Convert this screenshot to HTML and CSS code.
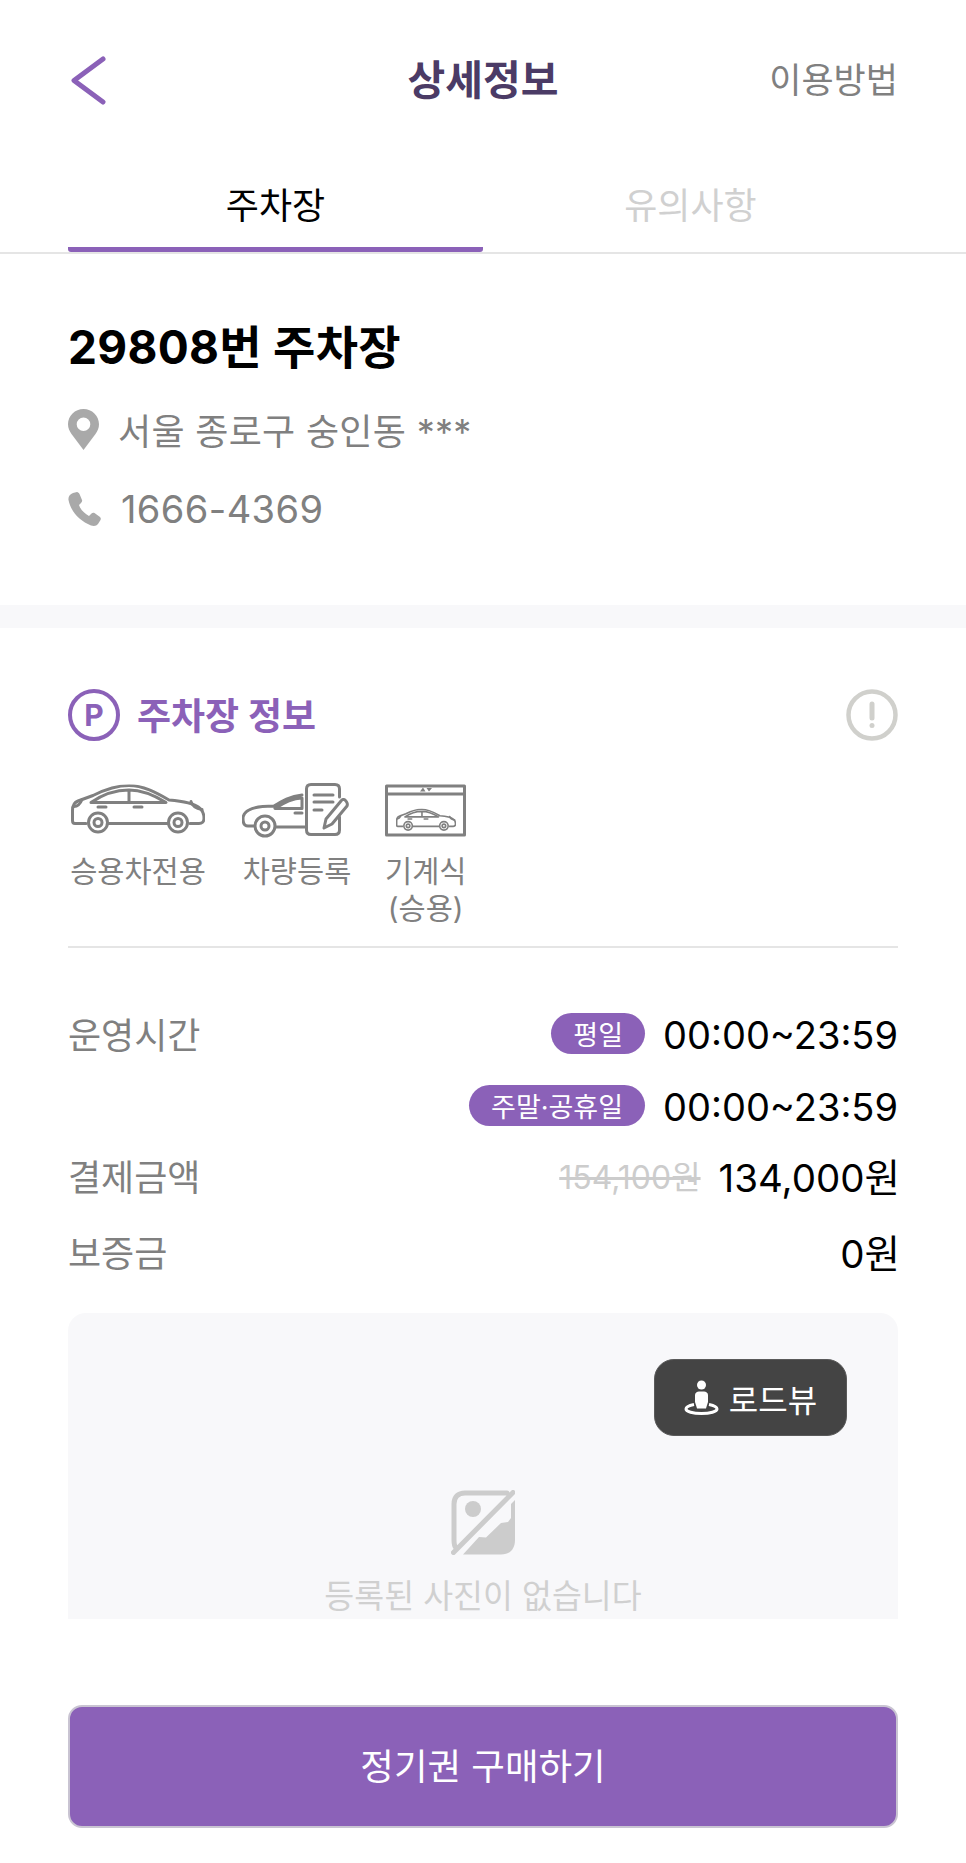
FILE: index.html
```html
<!doctype html>
<html lang="ko">

<head>
    <title>상세정보</title>
    <meta charset="UTF-8" />
    <meta name="viewport" content="width=device-width, initial-scale=1" />
    <link rel="stylesheet" href="styles.css">
</head>

<body>
    <svg class="defs" width="0" height="0">
        <symbol id="sedan" viewBox="0 0 134 52">
            <path d="M15 39H4C2 39 1.500 38 1.500 36V26C1.500 21 3 18 7 16.500L22 11C38 3 48 1 58 1C72 1 85 8 98 15.500C110 16.500 122 18 128 23C132 26 133 30 133 34C133 37 131 39 128 39H119M97 39H37" />
            <path d="M20 18C33 9 46 5.500 58 5.500C70 5.500 82 10 95 18H20ZM58 6V18M27 22.500H35M63 22.500H71M120 17C121 21 125 24 131 25M3 22C6 22 9 20 11 15" />
            <circle cx="27" cy="38" r="9.500" />
            <circle cx="27" cy="38" r="4" />
            <circle cx="107" cy="38" r="9.500" />
            <circle cx="107" cy="38" r="4" />
        </symbol>
    </svg>

    <div class="page">
        <header class="topbar">
            <svg class="back" width="36" height="50" viewBox="0 0 36 50">
                <path d="M32 3L3 24.500L32 46" />
            </svg>
            <h1 class="topbar-title">상세정보</h1>
            <span class="topbar-link">이용방법</span>
        </header>

        <nav class="tabs">
            <div class="tab active">주차장</div>
            <div class="tab">유의사항</div>
        </nav>

        <section class="summary">
            <h2 class="lot-name">29808번 주차장</h2>
            <div class="contact">
                <svg width="31" height="41" viewBox="0 0 31 41">
                    <path class="icon-grey" fill-rule="evenodd" d="M15.500 0C24 0 31 6.800 31 15.200C31 19 29.500 22 27.500 25L15.500 41L3.500 25C1.500 22 0 19 0 15.200C0 6.800 7 0 15.500 0ZM15.500 8.500A6.800 6.800 0 1 0 15.500 22.100A6.800 6.800 0 1 0 15.500 8.500Z" />
                </svg>
                <span class="address">서울 종로구 숭인동 ***</span>
            </div>
            <div class="contact phone-row">
                <svg width="33" height="34" viewBox="0 0 33 34">
                    <path class="icon-grey" d="M5 1L9 0C10 0 11 1 11.500 2L14 8C14.500 9 14 10 13 11L11 13C12 17 16 21 21 24L23.500 21.500C24.500 20.500 25.500 20.500 26.500 21L32 25C33 26 33 27 32.500 28L30 32C28.500 34 26 34.500 23 33.500C12 29 3 20 0.500 8C0 5 2 2 5 1Z" />
                </svg>
                <span class="phone">1666-4369</span>
            </div>
        </section>

        <div class="band"></div>

        <section class="info">
            <div class="info-head">
                <span class="p-mark">P</span>
                <h3 class="info-title">주차장 정보</h3>
                <svg class="alert" width="52" height="52" viewBox="0 0 52 52">
                    <circle cx="26" cy="26" r="23.500" />
                    <path d="M26 15V29" />
                    <circle class="alert-dot" cx="26" cy="36.500" r="2.500" />
                </svg>
            </div>

            <div class="amenities">
                <div class="amenity">
                    <svg class="line-icon" width="136" height="52" viewBox="0 0 136 52">
                        <use href="#sedan" width="134" height="52" x="1" />
                    </svg>
                    <span>승용차전용</span>
                </div>
                <div class="amenity">
                    <svg class="line-icon" width="110" height="55" viewBox="0 0 110 55">
                        <path d="M60 12C48 13 40 18 32 23C22 23 12 24 7 27C3 29 1 32 1 36C1 40 2 43 6 43H12M34 44H63M33 25.500H60V15C50 15.500 41 20 33 25.500ZM53 30H60" />
                        <circle cx="23" cy="43" r="10" />
                        <circle cx="23" cy="43" r="4" />
                        <path d="M97.500 14V6C97.500 3 96 1.500 93 1.500H69C66 1.500 64.500 3 64.500 6V47C64.500 50 66 51.500 69 51.500H93C96 51.500 97.500 50 97.500 47V34M72 12H91M72 19H91M72 27H80" />
                        <path d="M103 17C105 19 106 21 105 23L90 41L82 45L84 36L99 18C100 16.500 102 16 103 17Z" />
                    </svg>
                    <span>차량등록</span>
                </div>
                <div class="amenity">
                    <svg class="line-icon" width="81" height="52" viewBox="0 0 81 52">
                        <rect x="1.500" y="1.500" width="78" height="49" />
                        <path d="M1.500 9.500H79.500" />
                        <path class="garage-arrows" d="M35 7L38 3L40.500 7ZM41.500 3.500H47L44 7Z" />
                        <use class="mini-car" href="#sedan" x="11" y="24" width="60" height="24" />
                    </svg>
                    <span>기계식<br>(승용)</span>
                </div>
            </div>

            <div class="rows">
                <div class="row">
                    <span class="row-label">운영시간</span>
                    <span class="pill">평일</span>
                    <span class="row-value">00:00~23:59</span>
                </div>
                <div class="row">
                    <span class="pill">주말·공휴일</span>
                    <span class="row-value">00:00~23:59</span>
                </div>
                <div class="row row-price">
                    <span class="row-label">결제금액</span>
                    <span class="old-price">154,100원</span>
                    <span class="row-won">134,000원</span>
                </div>
                <div class="row row-last">
                    <span class="row-label">보증금</span>
                    <span class="row-won">0원</span>
                </div>
            </div>

            <div class="photo">
                <button class="roadview">
                    <svg width="35" height="35" viewBox="0 0 35 35">
                        <circle class="rv-fill" cx="17.500" cy="5" r="4.500" />
                        <path class="rv-ring" d="M10 24.500C5 25.500 2 27 2 29C2 31.500 9 33.500 17.500 33.500C26 33.500 33 31.500 33 29C33 27 30 25.500 25 24.500" />
                        <path class="rv-fill" d="M11 15C11 13 13 11.500 15 11.500H20C22 11.500 24 13 24 15V22L22 28.500H13L11 22Z" />
                    </svg>
                    로드뷰
                </button>
                <svg class="no-photo" width="64" height="65" viewBox="0 0 64 65">
                    <path class="np-line" d="M56 3H14C7 3 3 7 3 14V50C3 54 4 57 5 58M2.500 62.500L62 2.500" />
                    <circle class="np-fill" cx="22" cy="19" r="8" />
                    <path class="np-fill" d="M12 64.500L28 47L35 47.500L50 33L57 32L60 28V14L64 10V50C64 59 59 64.500 50 64.500Z" />
                </svg>
                <p class="no-photo-text">등록된 사진이 없습니다</p>
            </div>
        </section>

        <button class="buy">정기권 구매하기</button>
    </div>
</body>

</html>
```

FILE: styles.css
```css
body {
    margin: 0;
    background: #fff;
    font-family: Inter, "Noto Sans CJK KR", sans-serif;
    color: #000;
}

.defs {
    display: block;
    height: 0;
}

.page {
    width: 966px;
    height: 1863px;
    overflow: hidden;
    display: flex;
    flex-direction: column;
}

h1, h2, h3, p {
    margin: 0;
}

/* top bar */
.topbar {
    height: 158px;
    padding: 0 68px 4px;
    display: grid;
    grid-template-columns: 1fr auto 1fr;
    align-items: center;
    box-sizing: border-box;
}

.back {
    margin: 7px 0 0 3px;
}

.back path {
    fill: none;
    stroke: #8b61b8;
    stroke-width: 5;
    stroke-linecap: round;
    stroke-linejoin: round;
}

.topbar-title {
    font-size: 41px;
    font-weight: 700;
    color: #4b3b66;
}

.topbar-link {
    justify-self: end;
    font-size: 35px;
    color: #808080;
}

/* tabs */
.tabs {
    height: 96px;
    box-sizing: border-box;
    padding: 0 68px;
    display: grid;
    grid-template-columns: 1fr 1fr;
    border-bottom: 2px solid #e5e5e5;
}

.tab {
    display: flex;
    align-items: center;
    justify-content: center;
    padding-top: 1px;
    font-size: 36px;
    color: #d0d0d0;
    height: 94px;
    box-sizing: border-box;
    border-bottom: 5px solid transparent;
}

.tab.active {
    color: #000;
    border-bottom-color: #8b61b8;
    border-radius: 0 0 3px 3px;
}

/* summary */
.summary {
    height: 351px;
    padding: 63px 68px 0;
    box-sizing: border-box;
}

.lot-name {
    font-size: 46px;
    font-weight: 700;
    line-height: 60px;
    letter-spacing: 0.300px;
}

.contact {
    display: flex;
    align-items: center;
    margin-top: 27px;
    height: 50px;
    color: #808080;
}

.icon-grey {
    fill: #a9a9a9;
}

.address {
    margin-left: 19px;
    font-size: 36px;
    letter-spacing: 0.300px;
}

.phone-row {
    margin-top: 30px;
}

.phone {
    margin-left: 20px;
    font-size: 38px;
    letter-spacing: 0.400px;
}

.band {
    height: 23px;
    background: #f8f8fa;
}

/* parking info */
.info {
    padding: 61px 68px 0;
}

.info-head {
    display: flex;
    align-items: center;
    height: 52px;
}

.p-mark {
    width: 52px;
    height: 52px;
    box-sizing: border-box;
    border: 4.500px solid #8b61b8;
    border-radius: 50%;
    display: flex;
    align-items: center;
    justify-content: center;
    color: #8b61b8;
    font-size: 30px;
    font-weight: 700;
}

.info-title {
    margin-left: 17px;
    padding-bottom: 3px;
    font-size: 37px;
    font-weight: 700;
    color: #8b61b8;
}

.alert {
    margin-left: auto;
    fill: none;
    stroke: #d0d0cc;
    stroke-width: 4.500;
}

.alert path {
    stroke-width: 5;
    stroke-linecap: round;
}

.alert-dot {
    fill: #d0d0cc;
    stroke: none;
}

.amenities {
    margin-top: 42px;
    padding: 0 0 19px 2px;
    display: flex;
    gap: 33px;
    border-bottom: 2px solid #e5e5e5;
}

.amenity {
    display: flex;
    flex-direction: column;
    align-items: center;
    font-size: 29.500px;
    line-height: 37px;
    color: #808080;
    text-align: center;
}

.amenity:first-child {
    margin-right: 3px;
}

.amenity svg {
    height: 55px;
    margin-bottom: 15px;
    flex: none;
}

.line-icon {
    fill: none;
    stroke: #808080;
    stroke-width: 3;
    stroke-linecap: round;
    stroke-linejoin: round;
}

.garage-arrows {
    fill: #808080;
    stroke: none;
}

.mini-car {
    stroke-width: 3.600;
}

/* rows */
.rows {
    margin-top: 49px;
}

.row {
    height: 72.500px;
    display: flex;
    align-items: center;
    justify-content: flex-end;
}

.row-price {
    margin-top: -3px;
}

.row-last {
    margin-top: 3px;
}

.row-label {
    margin-right: auto;
    font-size: 36px;
    color: #808080;
}

.row-value {
    padding-top: 3px;
    font-size: 38px;
}

.row-won {
    margin-right: -2px;
    font-size: 38.500px;
}

.pill {
    height: 41px;
    padding: 0 22px;
    margin-right: 18px;
    border-radius: 21px;
    background: #8b61b8;
    color: #fff;
    font-size: 27px;
    display: flex;
    align-items: center;
}

.old-price {
    margin-right: 18px;
    font-size: 32px;
    color: #cccccc;
    text-decoration: line-through;
}

/* photo box */
.photo {
    margin-top: 26px;
    height: 306px;
    overflow: hidden;
    background: #f8f8fa;
    border-radius: 18px 18px 0 0;
    display: flex;
    flex-direction: column;
    align-items: center;
}

.roadview {
    align-self: flex-end;
    flex: none;
    width: 193px;
    height: 77px;
    margin: 46px 51px 0 0;
    border: 1px solid #5a5a5a;
    border-radius: 20px;
    background: #444;
    color: #fff;
    font-family: inherit;
    font-size: 32px;
    display: flex;
    align-items: center;
    justify-content: center;
    gap: 10px;
}

.rv-fill {
    fill: #fff;
}

.rv-ring {
    fill: none;
    stroke: #fff;
    stroke-width: 3;
}

.no-photo {
    flex: none;
    margin-top: 54px;
}

.np-line {
    fill: none;
    stroke: #cccccc;
    stroke-width: 5;
    stroke-linecap: round;
}

.np-fill {
    fill: #cccccc;
}

.no-photo-text {
    margin-top: 17px;
    font-size: 32.500px;
    line-height: 50px;
    color: #d0d0d0;
    white-space: nowrap;
}

/* buy button */
.buy {
    margin: 86px 68px 0;
    padding-bottom: 5px;
    height: 123px;
    flex: none;
    border: 2px solid #c9c4d2;
    border-radius: 14px;
    background: #8b61b8;
    color: #fff;
    font-family: inherit;
    font-size: 36.500px;
}
```
